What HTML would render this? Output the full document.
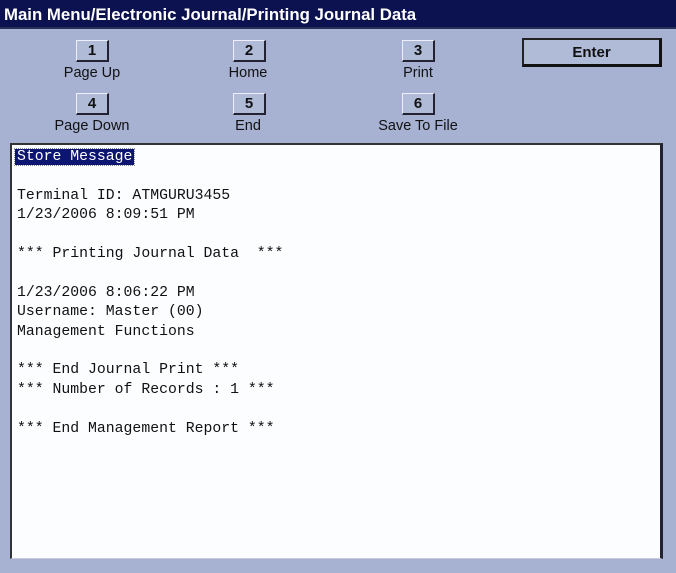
<!DOCTYPE html><html><head><style>
body{margin:0;width:676px;height:573px;background:#a7b2d3;position:relative;overflow:hidden;font-family:"Liberation Sans",sans-serif}
.title{position:absolute;left:0;top:0;width:676px;height:29px;background:#0c1250;color:#fff;font-weight:bold;font-size:16.8px;line-height:29px;padding-left:4px;box-sizing:border-box;border-bottom:2px solid #2a2f5a}
.btn{position:absolute;width:33px;height:22px;background:#b0bbd8;border:1px solid #eef;border-right:2px solid #223;border-bottom:2px solid #223;box-sizing:border-box;text-align:center;font-weight:bold;font-size:15px;line-height:20px;color:#111}
.lbl{position:absolute;font-size:14.5px;color:#111;text-align:center;width:140px}
.box{position:absolute;left:10px;top:143px;width:653px;height:416px;background:#fcfdff;border-top:2px solid #333;border-left:2px solid #333;border-right:3px solid #223;border-bottom:1px solid #ccd;box-sizing:border-box}
pre{margin:0;position:absolute;left:5px;top:3px;font-family:"Liberation Mono",monospace;font-size:14.8px;line-height:19.4px;color:#111}
.sel{background:#0c1670;color:#fff;outline:1px dotted #889;padding:0 2px;margin-left:-2px}
</style></head><body>
<div class="title">Main Menu/Electronic Journal/Printing Journal Data</div>
<div class="btn" style="left:76px;top:40px">1</div><div class="lbl" style="left:22px;top:65px">Page Up</div>
<div class="btn" style="left:233px;top:40px">2</div><div class="lbl" style="left:178px;top:65px">Home</div>
<div class="btn" style="left:402px;top:40px">3</div><div class="lbl" style="left:348px;top:65px">Print</div>
<div class="btn" style="left:76px;top:93px">4</div><div class="lbl" style="left:22px;top:118px">Page Down</div>
<div class="btn" style="left:233px;top:93px">5</div><div class="lbl" style="left:178px;top:118px">End</div>
<div class="btn" style="left:402px;top:93px">6</div><div class="lbl" style="left:348px;top:118px">Save To File</div>
<div class="btn" style="left:522px;top:38px;width:140px;height:29px;line-height:26px;border:2px solid #222;border-right:3px solid #111;border-bottom:3px solid #111">Enter</div>
<div class="box"><pre><span class="sel">Store Message</span>

Terminal ID: ATMGURU3455
1/23/2006 8:09:51 PM

*** Printing Journal Data  ***

1/23/2006 8:06:22 PM
Username: Master (00)
Management Functions

*** End Journal Print ***
*** Number of Records : 1 ***

*** End Management Report ***</pre></div>
</body></html>
